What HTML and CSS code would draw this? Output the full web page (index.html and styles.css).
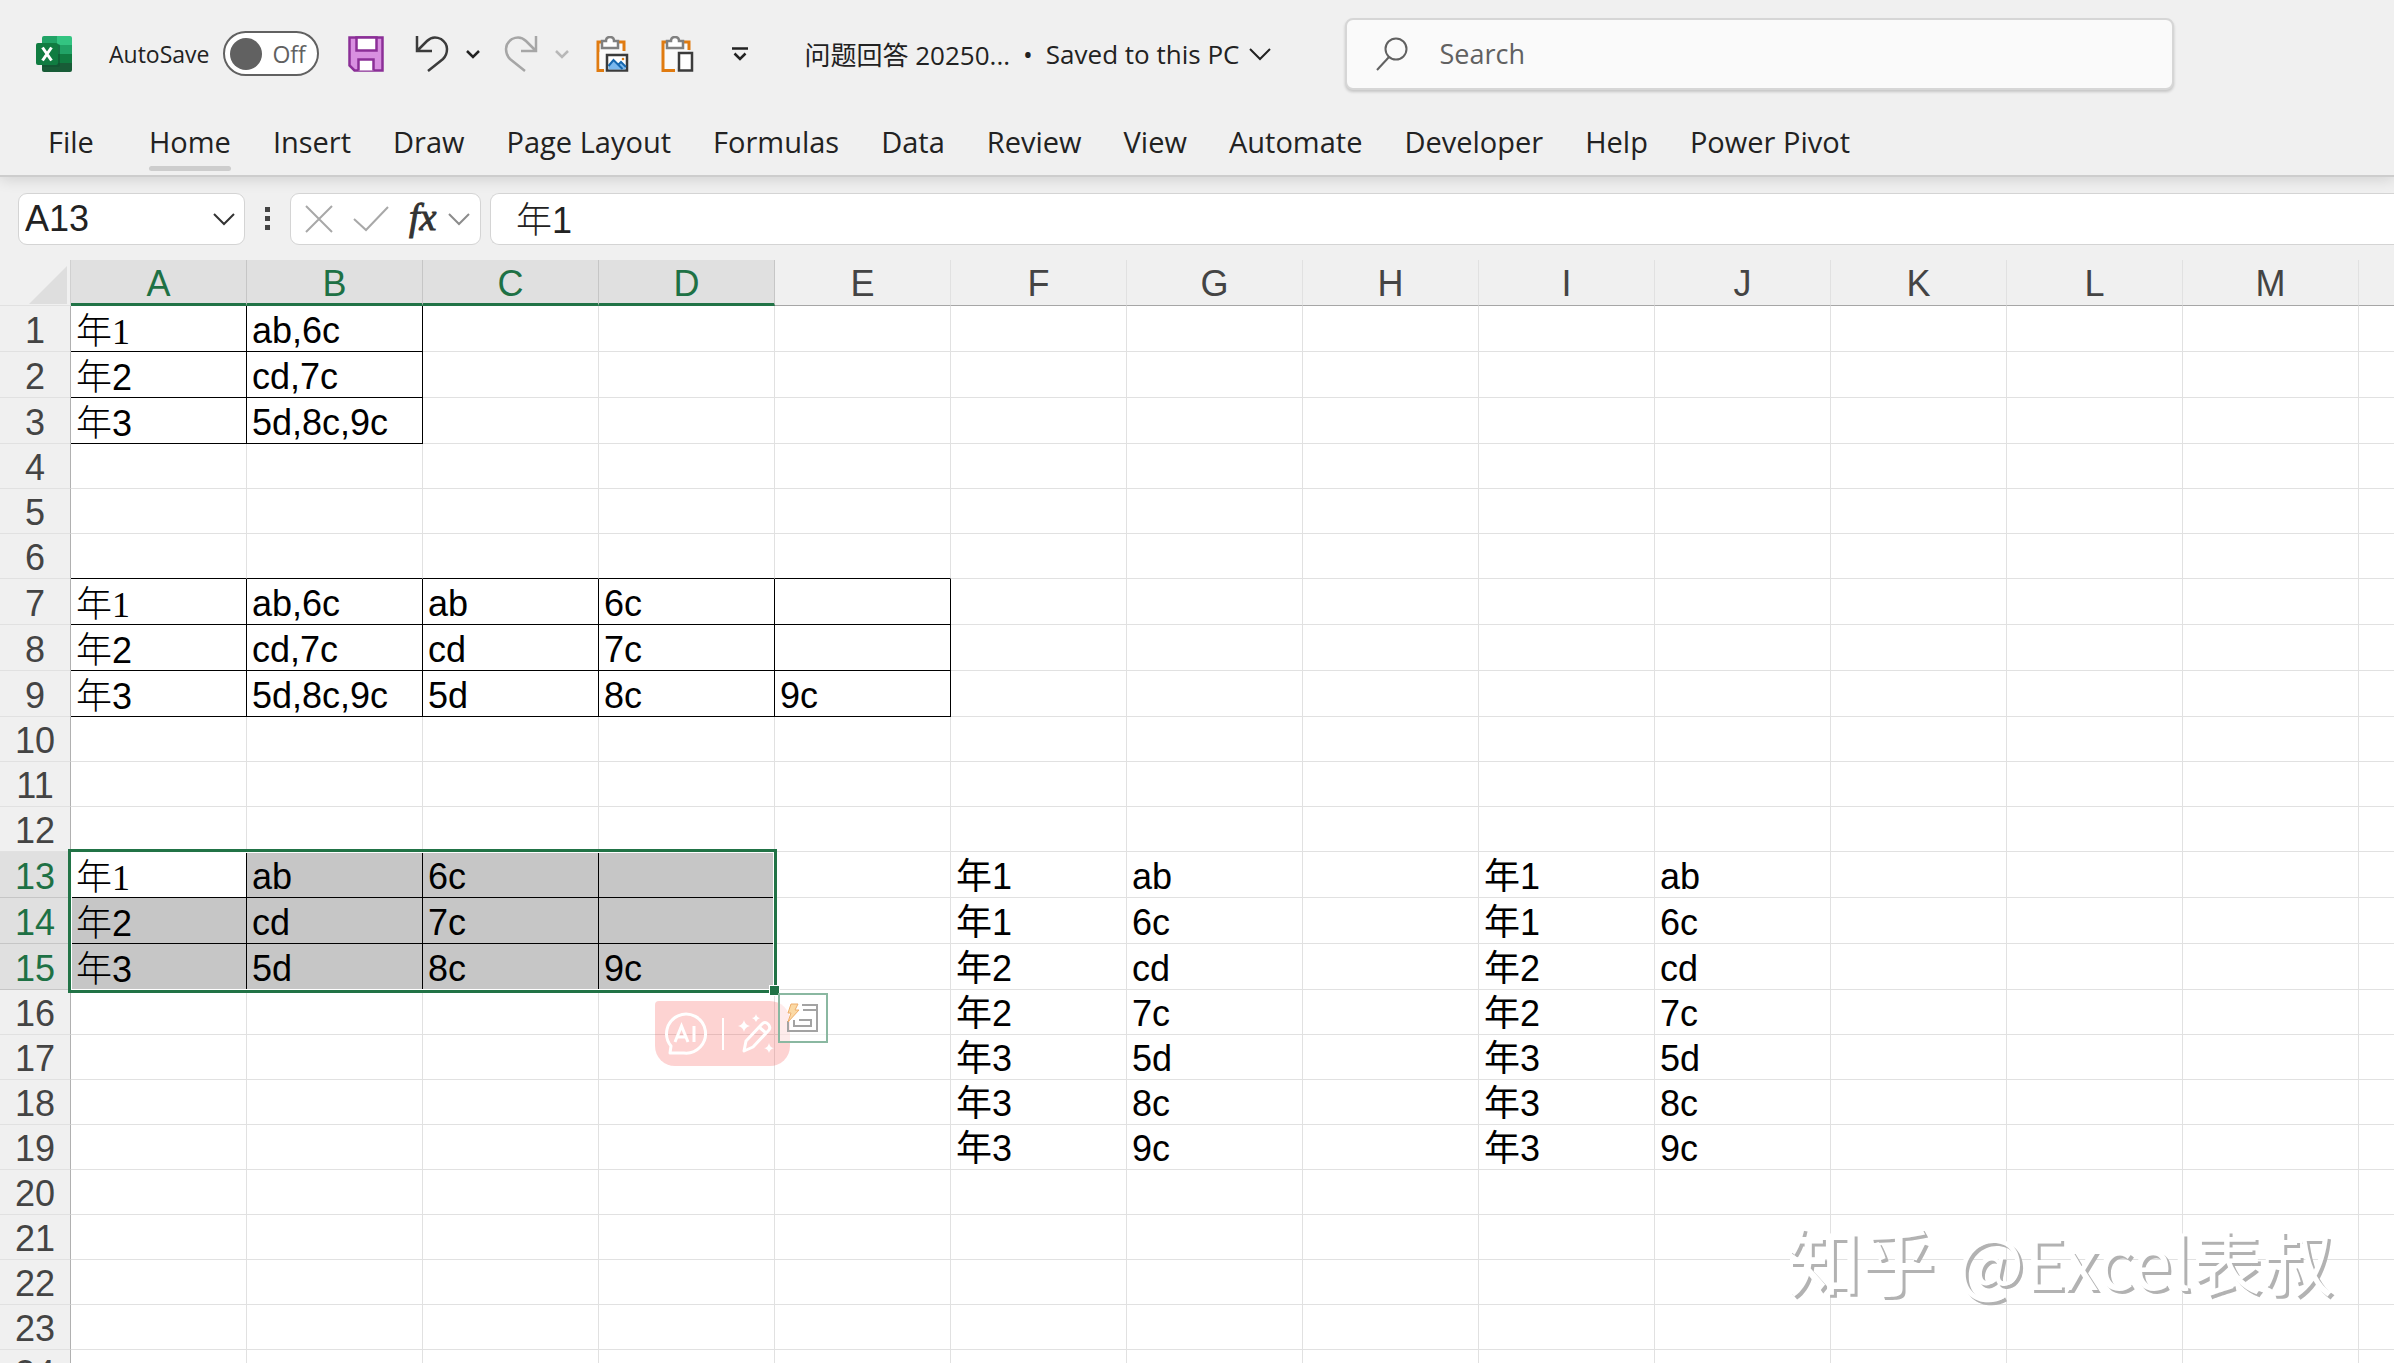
FILE: index.html
```html
<!DOCTYPE html>
<html lang="en">
<head>
<meta charset="utf-8">
<title>问题回答 20250... - Excel</title>
<link rel="stylesheet" href="styles.css">
</head>
<body>
<header class="ribbon">
  <div class="titlebar">
    <svg class="logo" viewBox="0 0 36 36" width="36" height="36" aria-hidden="true">
      <path fill="#21a366" d="M8 0h13v9H6V2q0-2 2-2z"/><path fill="#33c481" d="M21 0h13q2 0 2 2v7H21z"/>
      <path fill="#107c41" d="M6 9h15v9H6z"/><path fill="#21a366" d="M21 9h15v9H21z"/>
      <path fill="#185c37" d="M6 18h15v18H8q-2 0-2-2z"/><path fill="#107c41" d="M21 18h15v9H21z"/>
      <path fill="#185c37" d="M21 27h15v7q0 2-2 2H21z"/><rect x="6" y="8" width="18" height="23" rx="2" fill="#0f5230" opacity=".6"/>
      <rect y="7" width="22" height="22" rx="2" fill="#107c41"/>
      <path d="M6.500 11.500l9 13M15.500 11.500l-9 13" stroke="#fff" stroke-width="3"/>
    </svg>
    <label class="autosave" for="autosave">AutoSave
      <span class="switch"><input type="checkbox" id="autosave" role="switch">Off</span>
    </label>
    <button class="tool save" aria-label="Save">
      <svg viewBox="0 0 36 36" width="36" height="36"><path d="M1.500 1.500h33v33h-28l-5-5z" fill="#d88fe0" stroke="#8b2f97" stroke-width="2.500"/><path d="M8.500 1.500h20v13h-20zM10.500 34.500v-11h15v11" fill="#fff" stroke="#8b2f97" stroke-width="2.500"/></svg>
    </button>
    <button class="tool undo" aria-label="Undo">
      <svg viewBox="0 0 34 36" width="34" height="36" fill="none" stroke="#3b3b3b" stroke-width="2.500"><path d="M2 0v15h15M2 15L12 5Q18-1 26 3q6 4 6 10 0 6-4 10L13 35"/></svg>
    </button>
    <button class="tool drop" aria-label="Undo list"><svg viewBox="0 0 14 10" width="14" height="10" fill="none" stroke="#222" stroke-width="2.500"><path d="M1 2l6 6 6-6"/></svg></button>
    <button class="tool redo" aria-label="Redo">
      <svg viewBox="0 0 34 36" width="34" height="36" fill="none" stroke="#a6a6a6" stroke-width="2.500"><path d="M32 0v15H17M32 15L22 5Q16-1 8 3q-6 4-6 10 0 6 4 10l15 12"/></svg>
    </button>
    <button class="tool drop" aria-label="Redo list"><svg viewBox="0 0 14 10" width="14" height="10" fill="none" stroke="#b8b8b8" stroke-width="2.500"><path d="M1 2l6 6 6-6"/></svg></button>
    <button class="tool paste" aria-label="Paste picture">
      <svg viewBox="0 0 33 36" width="33" height="36"><path d="M8 34.500H2V6h26v9" fill="#fafafa" stroke="#e07b10" stroke-width="3"/><path d="M3.500 16h6v17h-6z" fill="#fafafa"/><path d="M6 12V5h4q0-4 4-4t4 4h4v7z" fill="#fff" stroke="#808080" stroke-width="2.500"/><path d="M11 19h20v15.500H11z" fill="#fff" stroke="#3b3b3b" stroke-width="2.500"/><path d="M12.500 30l5-6 5 5 3-2 4 4v2.500h-17z" fill="#7ab8ee"/><path d="M12.500 30l5-6 9 9M22 29l3-3 5 5" fill="none" stroke="#1668b0" stroke-width="2"/><circle cx="27" cy="23" r="1.300" fill="#e07b10"/></svg>
    </button>
    <button class="tool paste" aria-label="Paste">
      <svg viewBox="0 0 33 36" width="33" height="36"><path d="M14 34.500H2V6h26v8" fill="#fafafa" stroke="#e07b10" stroke-width="3"/><path d="M6 12V5h4q0-4 4-4t4 4h4v7z" fill="#fff" stroke="#808080" stroke-width="2.500"/><path d="M18 17h13v17.500H18z" fill="#fff" stroke="#3b3b3b" stroke-width="2.500"/></svg>
    </button>
    <button class="tool customize" aria-label="Customize toolbar"><svg viewBox="0 0 16 14" width="16" height="14" fill="none" stroke="#222" stroke-width="2.500"><path d="M0 1.500h16M2.500 6.500L8 12l5.500-5.500"/></svg></button>
    <button class="filename">问题回答 20250...<span class="dot">•</span>Saved to this PC
      <svg viewBox="0 0 22 14" width="22" height="14" fill="none" stroke="#222" stroke-width="2"><path d="M1 2l10 10L21 2"/></svg>
    </button>
    <label class="search">
      <svg viewBox="0 0 32 34" width="32" height="34" fill="none" stroke="#616161" stroke-width="2"><circle cx="20" cy="12" r="10.500"/><path d="M13 20L1 33"/></svg>
      <input type="search" placeholder="Search" aria-label="Search">
    </label>
  </div>
  <nav class="tabs">
    <a href="#file" class="file">File</a>
    <a href="#home" class="active">Home</a>
    <a href="#insert">Insert</a>
    <a href="#draw">Draw</a>
    <a href="#layout">Page Layout</a>
    <a href="#formulas">Formulas</a>
    <a href="#data">Data</a>
    <a href="#review">Review</a>
    <a href="#view">View</a>
    <a href="#automate">Automate</a>
    <a href="#developer">Developer</a>
    <a href="#help">Help</a>
    <a href="#pivot">Power Pivot</a>
  </nav>
</header>
<section class="formulabar">
  <div class="box namebox">
    <input type="text" value="A13" aria-label="Name box">
    <button aria-label="Names"><svg viewBox="0 0 22 14" width="22" height="14" fill="none" stroke="#333" stroke-width="2"><path d="M1 2l10 10L21 2"/></svg></button>
  </div>
  <svg class="grip" viewBox="0 0 5 24" width="5" height="24" fill="#444"><path d="M0 0h5v5H0zM0 9h5v5H0zM0 18h5v5H0z"/></svg>
  <div class="box actions">
    <button aria-label="Cancel"><svg viewBox="0 0 28 28" width="28" height="28" stroke="#a8a8a8" stroke-width="2"><path d="M1 1l26 26M27 1L1 27"/></svg></button>
    <button aria-label="Enter"><svg viewBox="0 0 36 28" width="36" height="28" fill="none" stroke="#a8a8a8" stroke-width="2"><path d="M1 14l12 11L35 2"/></svg></button>
    <button class="fx" aria-label="Insert function">fx</button>
    <button aria-label="Function list"><svg viewBox="0 0 22 14" width="22" height="14" fill="none" stroke="#8c8c8c" stroke-width="2"><path d="M1 2l10 10L21 2"/></svg></button>
  </div>
  <input class="box formula" type="text" value="年1" aria-label="Formula">
</section>
<main class="sheet">
  <table class="grid" id="grid"></table>
  <div class="selection"></div>
  <div class="assistant">
    <button aria-label="AI"><svg viewBox="0 0 44 44" width="44" height="44" fill="none" stroke="#fff" stroke-width="3"><path d="M6 41l1-7A19.500 19.500 0 1 1 20 41z" stroke-linejoin="round"/><path d="M11 30l6.500-16L24 30M13.500 25h8M30 14v16"/></svg></button>
    <button aria-label="Rewrite"><svg viewBox="0 0 38 40" width="38" height="40"><path d="M7 37l2-10L25 10q3-3 6 0t1 6L16 33zM22 13l7 6" fill="none" stroke="#fff" stroke-width="3" stroke-linejoin="round"/><path fill="#fff" d="M7 6q1 5 6 6-5 1-6 6-1-5-6-6 5-1 6-6zM19 0q1 4 4 4-3 1-4 4-1-3-4-4 3 0 4-4zM32 29q1 5 5 5-4 1-5 5-1-4-5-5 4 0 5-5z"/></svg></button>
  </div>
  <button class="pasteopt" aria-label="Quick analysis">
    <svg viewBox="0 0 32 30" width="32" height="30"><path d="M15 2h15v26H1V18M16 7h14M7 17v6h17v-6H12" fill="none" stroke="#a3a3a3" stroke-width="2"/><path d="M4 1h7L8 7h4L1 19l3-9H1z" fill="#fbd9a4" stroke="#eeae6c"/></svg>
  </button>
  <div class="watermark"><span class="site">知乎</span> @Excel表叔</div>
</main>
<script src="sheet.js"></script>
</body>
</html>
```
FILE: styles.css
```css
* { box-sizing: border-box; }
body {
  margin: 0;
  height: 100vh;
  overflow: hidden;
  display: flex;
  flex-direction: column;
  background: #f0f0f0;
  color: #222;
  font-family: "Open Sans", "Noto Sans CJK SC", sans-serif;
}
button, input { font: inherit; color: inherit; border: 0; background: none; padding: 0; margin: 0; outline: 0; }
button { display: flex; align-items: center; }
svg { display: block; flex: none; }

.ribbon {
  position: relative;
  z-index: 1;
  border-bottom: 2px solid #cdcdcd;
  box-shadow: 0 2px 14px rgba(0, 0, 0, .14);
  background: #f0f0f0;
}
.titlebar { display: flex; align-items: center; height: 107px; padding-left: 36px; font-size: 26px; white-space: nowrap; }
.logo { margin-right: 37px; }
.autosave { display: flex; align-items: center; gap: 14px; font-size: 23px; }
.switch {
  display: flex; align-items: center; gap: 10px;
  width: 96px; height: 45px; padding-left: 5px;
  border: 2px solid #616161; border-radius: 24px;
  background: #fff; color: #616161;
}
.switch input { appearance: none; width: 32px; height: 32px; border-radius: 50%; background: #616161; }
.save { margin-left: 29px; }
.undo { margin-left: 31px; }
.redo { margin-left: 24px; }
.drop { margin-left: 17px; }
.paste { margin-left: 32px; }
.drop + .paste { margin-left: 27px; }
.customize { margin-left: 38px; }
.filename { margin-left: 56px; }
.filename svg { margin-left: 10px; }
.dot { margin: 0 13px; }
.search {
  display: flex; align-items: center; gap: 31px;
  width: 34.6vw; height: 72px;
  margin: 0 9.2vw 0 auto; padding-left: 29px;
  border: 2px solid #d6d6d6; border-radius: 8px;
  background: #fafafa; box-shadow: 0 2px 3px rgba(0, 0, 0, .18);
  font-size: 27px; color: #616161;
}
.search input { flex: 1; }
.search input::placeholder { color: #616161; opacity: 1; }

.tabs { display: flex; gap: 42px; height: 68px; padding: 10px 48px 0; font-size: 29px; white-space: nowrap; }
.tabs a { color: #222; text-decoration: none; line-height: 50px; height: 53px; }
.tabs .file { margin-right: 13px; }
.tabs .active { position: relative; }
.tabs .active::after { content: ""; position: absolute; inset: auto 0 -1px; height: 5px; border-radius: 3px; background: #cdcdcd; }

.formulabar {
  display: flex; align-items: center;
  padding: 16px 0 15px 18px;
  font: 36px "Liberation Sans", "Noto Sans CJK SC", sans-serif;
}
.box { height: 52px; border: 1px solid #d4d4d4; border-radius: 9px; background: #fff; }
.namebox { display: flex; justify-content: space-between; width: 227px; padding: 0 9px 0 6px; }
.namebox input { width: 150px; }
.grip { margin: 0 20px; }
.actions { display: flex; gap: 20px; width: 191px; padding: 0 4px 0 14px; }
.fx { font: italic 38px "Liberation Serif", serif; color: #333; -webkit-text-stroke: 1px #333; padding-bottom: 4px; }
.actions .fx + button { margin-left: -8px; }
.formula { flex: 1; margin-left: 9px; padding: 0 0 4px 25px; border-right: 0; border-radius: 9px 0 0 9px; font-weight: 300; }

.sheet { position: relative; flex: 1; overflow: hidden; font: 36px/38px "Liberation Sans", "Noto Sans CJK SC", sans-serif; }
.grid { table-layout: fixed; width: 2535px; border-collapse: separate; border-spacing: 0; background: #fff; }
.grid th, .grid td { height: 45px; padding: 0; border: 0 solid #e1e1e1; border-width: 0 1px 1px 0; white-space: nowrap; overflow: hidden; }
.grid th { font-weight: 400; color: #444; background: #f0f0f0; padding-top: 4px; }
.grid thead th { height: 46px; padding-top: 3px; border-bottom-color: #a6a6a6; }
.grid thead .corner { width: 71px; padding: 0; border-right-color: #d0d0d0; border-bottom-color: #e1e1e1; }
.corner svg { margin: 4px 0 0 29px; }
.grid .col { width: 176px; }
.grid tbody th { border-right-color: #b0b0b0; }
.grid .picked { background: #e0e0e0; color: #1e7145; border-color: #c6c6c6; }
.grid thead .picked { padding-top: 4px; border-bottom: 3px solid #217346; }
.grid td { padding: 4px 0 0 5px; color: #000; }
.grid tr.tall > * { height: 46px; }
.grid .right { border-right-color: #000; }
.grid .bottom { border-bottom-color: #000; }
.grid .song { padding-top: 6px; font-weight: 300; }
.song span { font-weight: 400; }
.song .thin { font-family: "Liberation Serif", serif; }
.grid .shade { background: #c6c6c6; }

.selection {
  position: absolute; left: 68px; top: 589px; width: 709px; height: 144px;
  border: 3px solid #217346;
  box-shadow: inset 0 0 0 1px #fff;
}
.selection::after {
  content: ""; position: absolute; right: -5px; bottom: -5px; width: 9px; height: 9px;
  background: #217346; outline: 1px solid #fff;
}
.assistant {
  position: absolute; left: 655px; top: 741px; width: 135px; height: 65px;
  display: flex; align-items: center; justify-content: space-between; padding: 0 15px 0 9px;
  border-radius: 4px 20px 20px 20px;
  background: linear-gradient(#fff, #fff) 67px 50% / 2px 32px no-repeat, rgba(248, 80, 75, .25);
}
.pasteopt {
  position: absolute; left: 778px; top: 733px; width: 50px; height: 50px;
  justify-content: center;
  border: 2px solid #8ab8a1; background: rgba(255, 255, 255, .55);
}
.watermark {
  position: absolute; left: 1787px; top: 948px;
  font: 71px/100px "Noto Sans CJK SC", sans-serif; color: #fff; white-space: nowrap;
  text-shadow: 3px 3px 0 #b2b2b2;
}
.site { margin-right: 6px; font-size: 74px; font-weight: 500; }
```
FILE: sheet.js
```js
const columns = "ABCDEFGHIJKLM".split("").concat("");
const values = {
  A1: "年1", B1: "ab,6c", A2: "年2", B2: "cd,7c", A3: "年3", B3: "5d,8c,9c",
  A7: "年1", B7: "ab,6c", C7: "ab", D7: "6c",
  A8: "年2", B8: "cd,7c", C8: "cd", D8: "7c",
  A9: "年3", B9: "5d,8c,9c", C9: "5d", D9: "8c", E9: "9c",
  A13: "年1", B13: "ab", C13: "6c", A14: "年2", B14: "cd", C14: "7c",
  A15: "年3", B15: "5d", C15: "8c", D15: "9c"
};
[["年1", "ab"], ["年1", "6c"], ["年2", "cd"], ["年2", "7c"], ["年3", "5d"], ["年3", "8c"], ["年3", "9c"]]
  .forEach(([year, code], i) => {
    const row = 13 + i;
    values["F" + row] = values["I" + row] = year;
    values["G" + row] = values["J" + row] = code;
  });

// Bordered blocks: first row, last row, number of columns
const blocks = [[1, 3, 2], [7, 9, 5], [13, 15, 4]];

function cell(col, row) {
  const text = values[columns[col] + row] || "";
  const classes = [];
  for (const [first, last, width] of blocks) {
    if (col >= width) continue;
    if (row >= first && row <= last) classes.push("right", "bottom");
    if (row === first - 1) classes.push("bottom");
  }
  if (row >= 13 && row <= 15 && col < 4 && (row > 13 || col > 0)) classes.push("shade");
  let html = text;
  if (col === 0 && text) {
    classes.push("song");
    html = `${text[0]}<span${text[1] === "1" ? ' class="thin"' : ""}>${text[1]}</span>`;
  }
  return `<td class="${classes.join(" ")}">${html}</td>`;
}

const corner = '<th class="corner"><svg viewBox="0 0 38 38" width="38" height="38"><path d="M38 0v38H0z" fill="#dedede"/></svg></th>';
const head = columns.map((c, i) => `<th scope="col" class="col${i < 4 ? " picked" : ""}">${c}</th>`).join("");
let body = "";
for (let row = 1; row <= 24; row++) {
  const tall = blocks.some(([first, last]) => row >= first && row <= last);
  const picked = row >= 13 && row <= 15;
  body += `<tr class="${tall ? "tall" : ""}"><th scope="row" class="${picked ? "picked" : ""}">${row}</th>` +
    columns.map((_, col) => cell(col, row)).join("") + "</tr>";
}
document.getElementById("grid").innerHTML = `<thead><tr>${corner}${head}</tr></thead><tbody>${body}</tbody>`;
```
